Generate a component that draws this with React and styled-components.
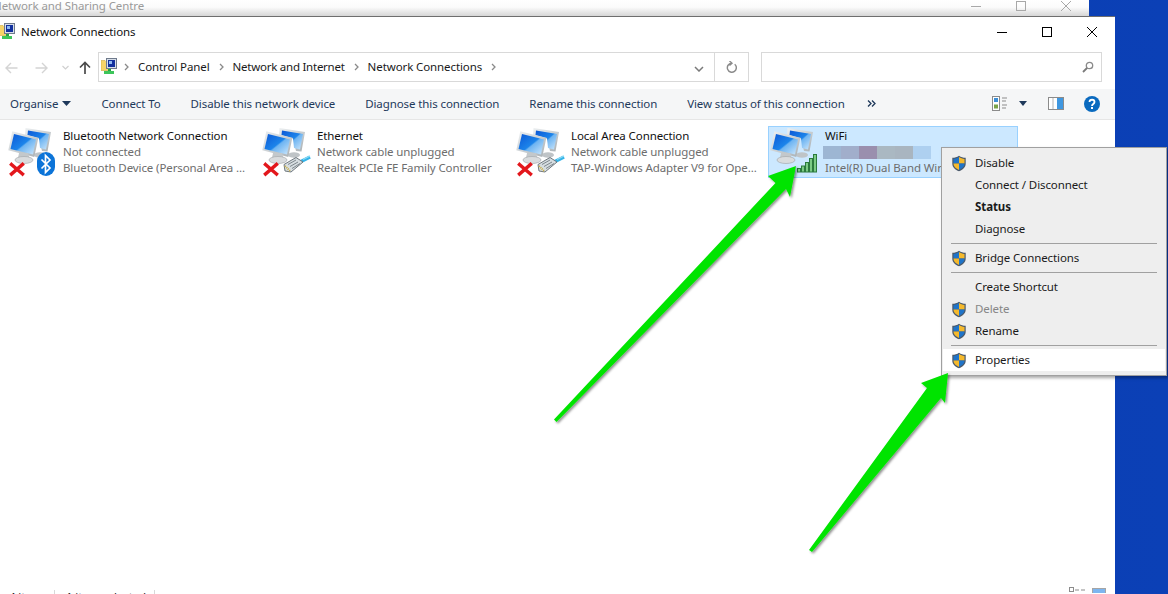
import React from 'react';
import styled, { createGlobalStyle } from 'styled-components';

const Global = createGlobalStyle`
  html, body { margin: 0; padding: 0; overflow: hidden; background: #0b3db3; }
  * { box-sizing: border-box; }
`;

const Screen = styled.div`
  position: relative;
  width: 1168px;
  height: 594px;
  overflow: hidden;
  background: linear-gradient(90deg, #0a38a8 0%, #0b40b6 100%);
  font-family: "Noto Sans", "Open Sans", sans-serif;
  font-size: 11.5px;
  letter-spacing: -0.1px;
  line-height: 16px;
`;
const BackWindow = styled.div`
  width: 1089px;
  height: 16px;
  display: flex;
  align-items: center;
  background: linear-gradient(180deg, #ffffff 0%, #fbfbfb 45%, #d6d6d6 100%);
  color: #9a9a9a;
  overflow: hidden;
`;
const BackTitle = styled.span`
  margin: -4px 0 0 -7px;
  flex: 1;
  white-space: nowrap;
`;
const ControlGroup = styled.div`
  display: flex;
  align-items: center;
  color: ${p => p.$color};
  gap: ${p => p.$gap}px;
  margin-right: ${p => p.$right}px;
  margin-top: ${p => p.$top || 0}px;
`;
const MainWindow = styled.div`
  width: 1115px;
  height: 593px;
  background: #fff;
  border-top: 1px solid #6e6e6e;
  display: flex;
  flex-direction: column;
`;
const TitleBar = styled.div`
  height: 35px;
  display: flex;
  align-items: center;
  color: #111;
  padding-bottom: 5px;
`;
const TitleIcon = styled.div`
  display: flex;
  margin: -2px 6px 0 -1px;
`;
const TitleText = styled.span`
  flex: 1;
`;
const AddressRow = styled.div`
  height: 30px;
  display: flex;
  flex: none;
`;
const NavGroup = styled.div`
  width: 98px;
  position: relative;
  display: flex;
  align-items: center;
  padding: 1px 0 0 5px;
`;
const Crumbs = styled.div`
  width: 651px;
  border: 1px solid #d9d9d9;
  display: flex;
  align-items: center;
  gap: 9px;
  padding-left: 2px;
  color: #1a1a1a;
`;
const CrumbIcon = styled.div`
  display: flex;
  margin: -2px -2px 0 0;
`;
const CrumbText = styled.span`
  letter-spacing: ${p => (p.$tight ? '-0.25px' : 'inherit')};
`;
const CrumbEnd = styled.div`
  margin-left: auto;
  display: flex;
  align-items: center;
  height: 100%;
`;
const DropCell = styled.div`
  width: 32px;
  height: 100%;
  display: flex;
  align-items: center;
  padding: 3px 0 0 11px;
  border-right: 1px solid #d9d9d9;
`;
const RefreshCell = styled.div`
  width: 33px;
  display: flex;
  justify-content: center;
`;
const SearchBox = styled.div`
  width: 341px;
  margin-left: 12px;
  border: 1px solid #d9d9d9;
  display: flex;
  align-items: center;
  justify-content: flex-end;
  padding-right: 7px;
`;
const Toolbar = styled.div`
  height: 31px;
  margin-top: 7px;
  flex: none;
  background: #f5f6f7;
  border-bottom: 1px solid #e6e6e6;
  display: flex;
  align-items: center;
  padding: 0 15px 1px 10px;
  gap: 30px;
  color: #1e395b;
`;
const ToolText = styled.span`
  display: flex;
  align-items: center;
  gap: 4px;
  white-space: nowrap;
`;
const More = styled.span`
  margin-left: -8px;
  display: flex;
`;
const ToolRight = styled.div`
  margin-left: auto;
  display: flex;
  align-items: center;
`;
const ToolIcon = styled.svg`
  margin-left: ${p => p.$ml}px;
`;
const Content = styled.div`
  flex: 1;
  display: flex;
  align-items: flex-start;
  gap: 4px;
  padding: 6px 0 0 6px;
`;
const Item = styled.div`
  width: 250px;
  height: 52px;
  display: flex;
  border: 1px solid ${p => (p.$selected ? '#99d1ff' : 'transparent')};
  background: ${p => (p.$selected ? '#cce8ff' : 'transparent')};
`;
const ItemIcon = styled.div`
  width: 56px;
  flex: none;
  margin: -1px 0 0 -1px;
`;
const ItemBody = styled.div`
  padding-top: 1px;
  margin-left: 1px;
  min-width: 0;
  white-space: nowrap;
`;
const ItemName = styled.div`
  color: #111;
`;
const ItemLine = styled.div`
  color: #6d6d6d;
`;
const Blur = styled.div`
  display: flex;
  height: 13px;
  margin: 2px 0 1px -2px;
`;
const BlurCell = styled.span`
  width: 18px;
  background: ${p => p.$c};
`;
const StatusBar = styled.div`
  height: 22px;
  flex: none;
  display: flex;
  align-items: flex-start;
  padding: 3px 9px 0 9px;
  color: #1a1a1a;
`;
const StatusCell = styled.span`
  width: ${p => p.$w}px;
  height: 14px;
  line-height: 14px;
  padding-left: ${p => p.$pad || 0}px;
  white-space: nowrap;
  border-right: 1px solid #d8d8d8;
`;
const StatusIcons = styled.div`
  margin-left: auto;
  display: flex;
  gap: 7px;
  margin-top: -3px;
`;
const Menu = styled.div`
  position: absolute;
  left: 941px;
  top: 147px;
  width: 226px;
  background: #eeeeee;
  border: 1px solid #a0a0a0;
  padding: 4px 1px;
  box-shadow: 2px 2px 3px rgba(0, 0, 0, 0.35);
  color: #1a1a1a;
`;
const MenuRow = styled.div`
  height: 22px;
  display: flex;
  align-items: center;
  background: ${p => (p.$hot ? '#ffffff' : 'transparent')};
  color: ${p => (p.$disabled ? '#868686' : 'inherit')};
  font-weight: ${p => (p.$bold ? 700 : 400)};
`;
const MenuGlyph = styled.div`
  width: 32px;
  display: flex;
  justify-content: flex-end;
  padding-right: 8px;
`;
const MenuSep = styled.div`
  height: 7px;
  padding: 3px 8px 3px 8px;
  &::after {
    content: '';
    display: block;
    height: 1px;
    background: #a0a0a0;
  }
`;
const ArrowLayer = styled.svg`
  position: absolute;
  left: 0;
  top: 0;
  pointer-events: none;
`;
const NavSvg = styled.svg`
  flex: none;
  margin-right: ${p => p.$mr || 0}px;
`;

const FolderNet = ({ s = 16 }) => (
  <svg width={s} height={s} viewBox="0 0 16 16">
    <path d="M0 2.500h4l1 1h3v9H0z" fill="#f6d468" stroke="#cfa93e" strokeWidth=".6" />
    <rect x="5.500" y="0.500" width="10" height="10" fill="#d7dee8" stroke="#6f7a8c" />
    <rect x="7" y="2" width="7" height="7" fill="#12309e" />
    <rect x="8" y="3" width="3" height="3" fill="#8fb8f0" />
    <rect x="7" y="11" width="3" height="2" fill="#23a541" />
    <rect x="3" y="13" width="10" height="3" fill="#3dc55a" />
  </svg>
);

const Monitors = () => (
  <>
    <defs>
      <linearGradient id="scr" x1="0" y1="0" x2="1" y2="1">
        <stop offset="0" stopColor="#0b58d6" />
        <stop offset=".5" stopColor="#1c84ea" />
        <stop offset=".55" stopColor="#6db4f2" />
        <stop offset="1" stopColor="#cfe8fb" />
      </linearGradient>
      <linearGradient id="bez" x1="0" y1="0" x2="1" y2="1">
        <stop offset="0" stopColor="#eef1f3" />
        <stop offset="1" stopColor="#a8afb3" />
      </linearGradient>
    </defs>
    <path d="M19.500 2 45 6 41.500 25.500 36 25 33 13 19 9z" fill="url(#bez)" />
    <path d="M22 4.500 43 8 40 23.500 34 22 33 12 21.500 9z" fill="url(#scr)" />
    <ellipse cx="34" cy="29" rx="6" ry="2.800" fill="#bfc4c7" />
    <path d="M6.300 5.300 32.300 12 28.300 31 2.300 24.300z" fill="url(#bez)" />
    <path d="M8 8 30 13.500 27 28.500 4.500 23z" fill="url(#scr)" />
    <path d="M13 27h9l1.500 5h-11.500z" fill="#c3c8cb" />
    <ellipse cx="18" cy="34" rx="9" ry="3.500" fill="#d9dcde" stroke="#a6abaf" strokeWidth=".7" />
  </>
);
const RedX = () => (
  <path d="M5.500 38.500 16.500 48M16.500 38.500 5.500 48" stroke="#e3171c" strokeWidth="3.400" strokeLinecap="square" fill="none" />
);
const BtBadge = () => (
  <>
    <rect x="31" y="26" width="18" height="24" rx="9" fill="#0c74d8" />
    <path d="M35.500 33.500 44 42l-4.500 4.500v-17L44 34l-8.500 8.500" fill="none" stroke="#fff" strokeWidth="1.700" />
  </>
);
const Plug = () => (
  <>
    <path d="M41 35.500 50 31" stroke="#35b4e8" strokeWidth="3.500" />
    <path d="M43 33.500 50 30" stroke="#8fdcf5" strokeWidth="1.200" />
    <path d="M24 38.500 36 31.500 43 36 31 46 25 45z" fill="#d6dde1" stroke="#6f787e" strokeWidth="1" />
    <path d="M28 38.500 36 34M30 40.500 38 36M32 42.500 40 37.500" stroke="#7d868c" strokeWidth="1" />
    <path d="M25 40 30 45" stroke="#c9ad3f" strokeWidth="2" strokeDasharray="1 1" />
  </>
);
const Bars = () => (
  <g fill="#7ccb85" stroke="#2c7a3e" strokeWidth="1">
    <rect x="29.500" y="42.500" width="3" height="3.500" />
    <rect x="33.500" y="40" width="3" height="6" />
    <rect x="37.500" y="36.500" width="3" height="9.500" />
    <rect x="41.500" y="32.500" width="3" height="13.500" />
    <rect x="45.500" y="28.500" width="3" height="17.500" />
  </g>
);
const NetIcon = ({ children }) => (
  <svg width="56" height="52" viewBox="0 0 56 52">
    <Monitors />
    {children}
  </svg>
);

const Shield = () => (
  <svg width="16" height="17" viewBox="0 0 16 17">
    <path d="M8 .7C6 2.200 3.800 2.800 1.300 2.800v6c0 3.600 3 6 6.700 7.500 3.700-1.500 6.700-3.900 6.700-7.500v-6C12.200 2.800 10 2.200 8 .7z" fill="#4b5a6b" />
    <path d="M8 2C6.300 3.200 4.500 3.800 2.500 3.900V8.500H8z" fill="#1f74c9" />
    <path d="M8 2c1.700 1.200 3.500 1.800 5.500 1.900V8.500H8z" fill="#f5b92c" />
    <path d="M2.500 8.500H8V15c-3-1.300-5.500-3.500-5.500-6.200z" fill="#f5b92c" />
    <path d="M13.500 8.500H8V15c3-1.300 5.500-3.500 5.500-6.200z" fill="#1f74c9" />
  </svg>
);

const Chev = ({ c = '#8a8a8a' }) => (
  <svg width="5" height="8" viewBox="0 0 5 8">
    <path d="M1 1 4 4 1 7" fill="none" stroke={c} strokeWidth="1.300" />
  </svg>
);

const Arrows = () => (
  <ArrowLayer width="1168" height="594" viewBox="0 0 1168 594">
    <defs>
      <filter id="arrowShadow" x="-10%" y="-10%" width="120%" height="120%">
        <feDropShadow dx="1.500" dy="1.500" stdDeviation="1" floodColor="#000" floodOpacity=".45" />
      </filter>
    </defs>
    <g fill="#04e404" filter="url(#arrowShadow)">
      <path d="M796 166 768 176 775.500 183 554 419.500 556.500 422 786 189 790 197z" />
      <path d="M948 373 921 383 927 388 809 550 812 552 941 398 945 403z" />
    </g>
  </ArrowLayer>
);

const WinControls = ({ gap, right, color, top }) => (
  <ControlGroup $gap={gap} $right={right} $color={color} $top={top}>
    <svg width="10" height="10" viewBox="0 0 10 10"><path d="M0 5.500h10" stroke="currentColor" /></svg>
    <svg width="10" height="10" viewBox="0 0 10 10"><rect x=".5" y=".5" width="9" height="9" fill="none" stroke="currentColor" /></svg>
    <svg width="10" height="10" viewBox="0 0 10 10"><path d="M0 0l10 10M10 0 0 10" stroke="currentColor" /></svg>
  </ControlGroup>
);

const menu = [
  { t: 'Disable', s: 1 },
  { t: 'Connect / Disconnect' },
  { t: 'Status', bold: 1 },
  { t: 'Diagnose' },
  { sep: 1 },
  { t: 'Bridge Connections', s: 1 },
  { sep: 1 },
  { t: 'Create Shortcut' },
  { t: 'Delete', s: 1, dis: 1 },
  { t: 'Rename', s: 1 },
  { sep: 1 },
  { t: 'Properties', s: 1, hot: 1 },
];

const blur = ['#9db6d3', '#a1aecb', '#9a8fae', '#aab8c2', '#a9b5c0', '#aed0f0'];

export default function App() {
  return (
    <Screen>
      <Global />
      <BackWindow>
        <BackTitle>Network and Sharing Centre</BackTitle>
        <WinControls gap={35} right={18} color="#a8a8a8" top={-5} />
      </BackWindow>
      <MainWindow>
        <TitleBar>
          <TitleIcon><FolderNet /></TitleIcon>
          <TitleText>Network Connections</TitleText>
          <WinControls gap={35} right={18} color="#000" />
        </TitleBar>
        <AddressRow>
          <NavGroup>
            <NavSvg width="13" height="12" viewBox="0 0 13 12" $mr={17}><path d="M12.500 6H1M6 1 1 6l5 5" fill="none" stroke="#d4d4d4" strokeWidth="1.400" /></NavSvg>
            <NavSvg width="13" height="12" viewBox="0 0 13 12" $mr={14}><path d="M.5 6H12M7 1l5 5-5 5" fill="none" stroke="#d4d4d4" strokeWidth="1.400" /></NavSvg>
            <NavSvg width="7" height="5" viewBox="0 0 7 5" $mr={10}><path d="M.5 1 3.500 4l3-3" fill="none" stroke="#d0d0d0" strokeWidth="1.200" /></NavSvg>
            <NavSvg width="12" height="13" viewBox="0 0 12 13"><path d="M6 13V1.500M1 6.500l5-5 5 5" fill="none" stroke="#4a4a4a" strokeWidth="1.700" /></NavSvg>
          </NavGroup>
          <Crumbs>
            <CrumbIcon><FolderNet /></CrumbIcon>
            <Chev />
            <CrumbText>Control Panel</CrumbText>
            <Chev />
            <CrumbText $tight>Network and Internet</CrumbText>
            <Chev />
            <CrumbText>Network Connections</CrumbText>
            <Chev />
            <CrumbEnd>
              <DropCell>
                <svg width="10" height="6" viewBox="0 0 10 6"><path d="M1 1l4 4 4-4" fill="none" stroke="#7a7a7a" strokeWidth="1.500" /></svg>
              </DropCell>
              <RefreshCell>
                <svg width="11" height="12" viewBox="0 0 11 12"><path d="M8.700 3.200A4.500 4.500 0 1 1 5.500 2.200M3.500 0 6 2.200 3.500 4.500" fill="none" stroke="#8a8a8a" strokeWidth="1.400" /></svg>
              </RefreshCell>
            </CrumbEnd>
          </Crumbs>
          <SearchBox>
            <svg width="12" height="12" viewBox="0 0 12 12"><circle cx="7.500" cy="4.500" r="3.200" fill="none" stroke="#8a8a8a" strokeWidth="1.300" /><path d="M5 7 1 11" stroke="#7a7a7a" strokeWidth="1.800" /></svg>
          </SearchBox>
        </AddressRow>
        <Toolbar>
          <ToolText>Organise
            <svg width="9" height="5" viewBox="0 0 9 5"><path d="M0 0h9L4.500 5z" fill="#1e395b" /></svg>
          </ToolText>
          <ToolText>Connect To</ToolText>
          <ToolText>Disable this network device</ToolText>
          <ToolText>Diagnose this connection</ToolText>
          <ToolText>Rename this connection</ToolText>
          <ToolText>View status of this connection</ToolText>
          <More>
            <svg width="9" height="7" viewBox="0 0 9 7"><path d="M1 .5 4 3.500 1 6.500M5 .5 8 3.500 5 6.500" fill="none" stroke="#1e395b" strokeWidth="1.300" /></svg>
          </More>
          <ToolRight>
            <ToolIcon $ml={0} width="16" height="15" viewBox="0 0 16 15">
              <rect x=".5" y=".5" width="7" height="14" fill="#fff" stroke="#8b8b8b" />
              <rect x="2" y="2" width="4" height="4" fill="#3d8fd6" />
              <rect x="2" y="8.500" width="4" height="4" fill="#7aa348" />
              <path d="M10 2h5M10 5h4M10 9h5M10 12h4" stroke="#8b8b8b" />
            </ToolIcon>
            <ToolIcon $ml={11} width="8" height="5" viewBox="0 0 8 5"><path d="M0 0h8L4 5z" fill="#1e395b" /></ToolIcon>
            <ToolIcon $ml={21} width="16" height="13" viewBox="0 0 16 13">
              <rect x=".5" y=".5" width="15" height="12" fill="#fff" stroke="#8b8b8b" />
              <rect x="9" y="1" width="6" height="11" fill="#3f97e0" />
              <path d="M5 1v11" stroke="#b5b5b5" />
            </ToolIcon>
            <ToolIcon $ml={20} width="16" height="16" viewBox="0 0 16 16">
              <circle cx="8" cy="8" r="8" fill="#0a6abf" />
              <path d="M5.500 6C5.600 3 10.500 3 10.500 6c0 2-2.500 2-2.500 4" fill="none" stroke="#fff" strokeWidth="1.800" />
              <rect x="7" y="11" width="2" height="2" fill="#fff" />
            </ToolIcon>
          </ToolRight>
        </Toolbar>
        <Content>
          <Item>
            <ItemIcon><NetIcon><RedX /><BtBadge /></NetIcon></ItemIcon>
            <ItemBody>
              <ItemName>Bluetooth Network Connection</ItemName>
              <ItemLine>Not connected</ItemLine>
              <ItemLine>Bluetooth Device (Personal Area ...</ItemLine>
            </ItemBody>
          </Item>
          <Item>
            <ItemIcon><NetIcon><RedX /><Plug /></NetIcon></ItemIcon>
            <ItemBody>
              <ItemName>Ethernet</ItemName>
              <ItemLine>Network cable unplugged</ItemLine>
              <ItemLine>Realtek PCIe FE Family Controller</ItemLine>
            </ItemBody>
          </Item>
          <Item>
            <ItemIcon><NetIcon><RedX /><Plug /></NetIcon></ItemIcon>
            <ItemBody>
              <ItemName>Local Area Connection</ItemName>
              <ItemLine>Network cable unplugged</ItemLine>
              <ItemLine>TAP-Windows Adapter V9 for Ope...</ItemLine>
            </ItemBody>
          </Item>
          <Item $selected>
            <ItemIcon><NetIcon><Bars /></NetIcon></ItemIcon>
            <ItemBody>
              <ItemName>WiFi</ItemName>
              <Blur>{blur.map(c => <BlurCell key={c} $c={c} />)}</Blur>
              <ItemLine>Intel(R) Dual Band Wireless-AC</ItemLine>
            </ItemBody>
          </Item>
        </Content>
        <StatusBar>
          <StatusCell $w={46}>4 items</StatusCell>
          <StatusCell $w={100} $pad={11}>1 item selected</StatusCell>
          <StatusIcons>
            <svg width="16" height="6" viewBox="0 0 16 6"><rect x=".5" y=".5" width="4" height="4" fill="none" stroke="#8b8b8b" /><path d="M6 3h4M12 3h4" stroke="#8b8b8b" /></svg>
            <svg width="14" height="6" viewBox="0 0 14 6"><rect x=".5" y="1.500" width="13" height="6" fill="#7db5ef" stroke="#a5a5a5" /></svg>
          </StatusIcons>
        </StatusBar>
      </MainWindow>
      <Menu>
        {menu.map((m, i) =>
          m.sep ? (
            <MenuSep key={i} />
          ) : (
            <MenuRow key={i} $hot={m.hot} $bold={m.bold} $disabled={m.dis}>
              <MenuGlyph>{m.s ? <Shield /> : null}</MenuGlyph>
              {m.t}
            </MenuRow>
          )
        )}
      </Menu>
      <Arrows />
    </Screen>
  );
}
